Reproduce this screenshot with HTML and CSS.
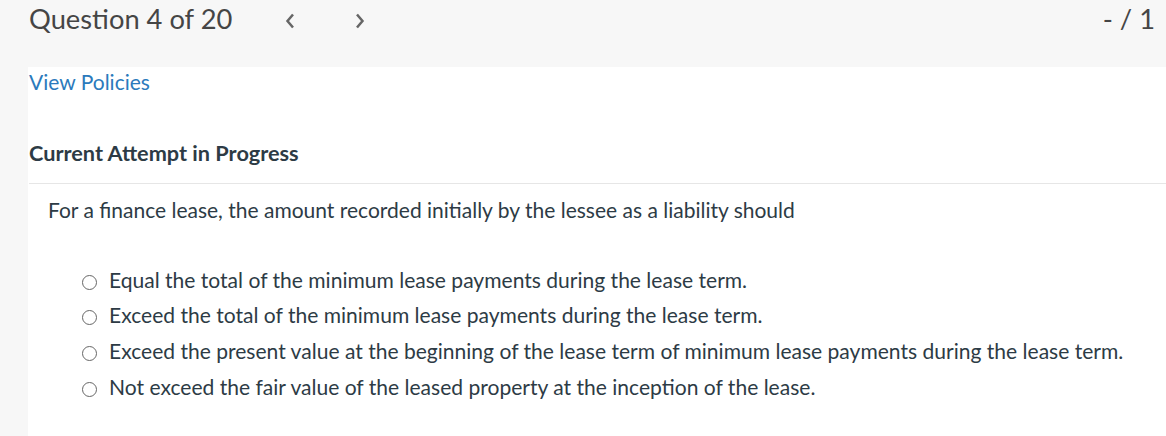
FILE: index.html
```html
<!DOCTYPE html>
<html>
<head>
<meta charset="utf-8">
<link rel="stylesheet" href="styles.css">
</head>
<body>
<header class="topbar">
  <div class="title">Question 4 of 20</div>
  <nav class="pager">
    <span class="chev">
      <svg width="10" height="16" viewBox="0 0 10 16"><path d="M8 1.5 L2.5 8 L8 14.5" fill="none" stroke="#666" stroke-width="2.5"/></svg>
    </span>
    <span class="chev">
      <svg width="10" height="16" viewBox="0 0 10 16"><path d="M2 1.5 L7.5 8 L2 14.5" fill="none" stroke="#666" stroke-width="2.5"/></svg>
    </span>
  </nav>
  <div class="score">- / 1</div>
</header>
<main class="content">
  <a class="policies" href="#">View Policies</a>
  <h2 class="attempt">Current Attempt in Progress</h2>
  <div class="question">
    <p class="prompt">For a finance lease, the amount recorded initially by the lessee as a liability should</p>
    <ul class="options">
      <li class="option"><span class="radio"></span>Equal the total of the minimum lease payments during the lease term.</li>
      <li class="option"><span class="radio"></span>Exceed the total of the minimum lease payments during the lease term.</li>
      <li class="option"><span class="radio"></span>Exceed the present value at the beginning of the lease term of minimum lease payments during the lease term.</li>
      <li class="option"><span class="radio"></span>Not exceed the fair value of the leased property at the inception of the lease.</li>
    </ul>
  </div>
</main>
</body>
</html>
```
FILE: styles.css
```css
html, body {
  margin: 0;
  padding: 0;
  background: #f7f7f7;
  font-family: Lato, "Open Sans", sans-serif;
  color: #2d3b45;
}
.topbar {
  height: 67px;
  display: flex;
  align-items: flex-start;
  padding: 0 11px 0 29px;
  box-sizing: border-box;
}
.title {
  font-size: 27.3px;
  line-height: 32px;
  padding-top: 2.5px;
  color: #454545;
}
.pager {
  display: flex;
  gap: 60px;
  margin-left: 53px;
  padding-top: 13px;
}
.chev {
  display: flex;
  width: 10px;
  height: 16px;
}
.score {
  margin-left: auto;
  font-size: 27.3px;
  line-height: 32px;
  padding-top: 2.5px;
  color: #454545;
}
.content {
  margin-left: 28px;
  background: #fff;
  min-height: 369px;
  padding-top: 1.5px;
}
.policies {
  display: inline-block;
  margin-left: 1px;
  font-size: 21px;
  line-height: 25px;
  color: #2b7abc;
  text-decoration: none;
}
.attempt {
  margin: 46px 0 0 1px;
  font-size: 21.7px;
  line-height: 26px;
  font-weight: 700;
  color: #2d3b45;
  padding-bottom: 17px;
  border-bottom: 1px solid #e6e6e6;
}
.question {
  padding: 13px 0 0 20px;
}
.prompt {
  margin: 0;
  font-size: 21px;
  line-height: 26px;
}
.options {
  list-style: none;
  margin: 39px 0 0 0;
  padding: 0 0 0 34px;
}
.option {
  font-size: 21.05px;
  line-height: 35.8px;
  white-space: nowrap;
}
.radio {
  display: inline-block;
  vertical-align: middle;
  box-sizing: border-box;
  width: 15px;
  height: 15px;
  border: 1.5px solid #666;
  border-radius: 50%;
  margin-right: 12px;
}
```
